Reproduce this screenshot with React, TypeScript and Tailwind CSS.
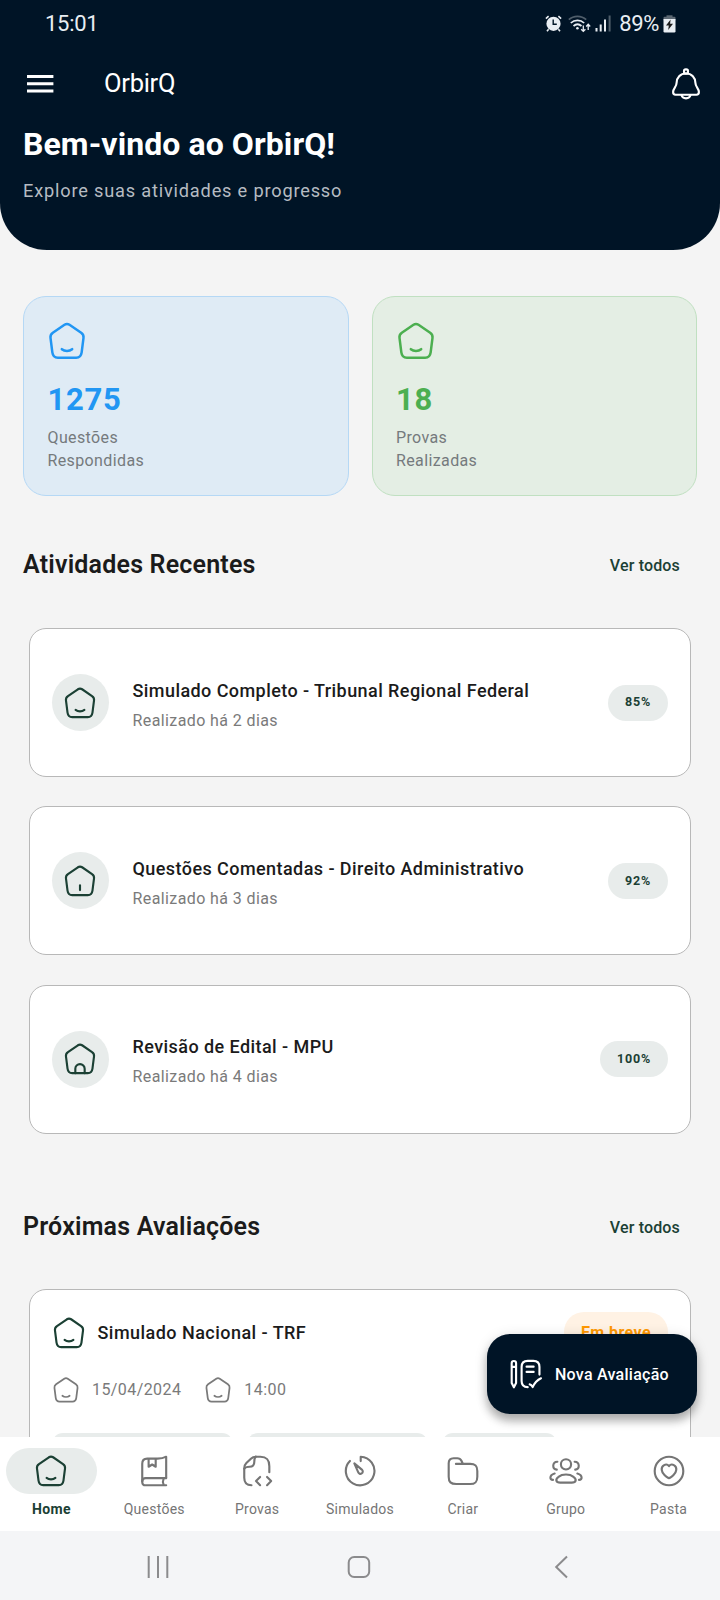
import type { ReactNode } from "react";

type IconProps = { className?: string; children?: ReactNode };

function Icon({ className = "", children }: IconProps) {
  return (
    <svg
      viewBox="0 0 24 24"
      fill="none"
      stroke="currentColor"
      strokeWidth="1.5"
      strokeLinecap="round"
      strokeLinejoin="round"
      className={"shrink-0 " + className}
    >
      {children}
    </svg>
  );
}

const HOUSE =
  "M10.5 2.3C11.4 1.7 12.6 1.7 13.5 2.3L20.5 7.1C21.6 7.9 22.1 8.8 21.9 10.1L20.8 18.8C20.5 21.1 19.6 22 17.5 22H6.5C4.4 22 3.5 21.1 3.2 18.8L2.1 10.1C1.9 8.8 2.4 7.9 3.5 7.1Z";

function House({ className, variant = "smile" }: { className?: string; variant?: "smile" | "line" | "door" }) {
  return (
    <Icon className={className}>
      <path d={HOUSE} />
      {variant === "smile" && <path d="M8.9 16.9C10.6 18.3 13.4 18.3 15.1 16.9" />}
      {variant === "line" && <path d="M12 15.1V18.4" />}
      {variant === "door" && <path d="M8.7 22V18.9A3.3 3.3 0 0 1 15.3 18.9V22" />}
    </Icon>
  );
}

function StatusBar() {
  return (
    <div className="flex h-[47px] items-center justify-between pr-[44px] pl-[45px] text-[22px] leading-none text-[#e9eef3]">
      <span className="tracking-[-0.3px]">15:01</span>
      <div className="flex items-center">
        <svg viewBox="0 0 17 17" className="h-[17px] w-[17px]">
          <circle cx="8.5" cy="8.8" r="7.1" fill="#e9eef3" />
          <path d="M0.9 3.6L3.6 1.1M16.1 3.6L13.4 1.1M3.6 14.2L2 16.2M13.4 14.2L15 16.2" stroke="#e9eef3" strokeWidth="1.6" />
          <path d="M8.2 4.6V9.2H11.8" fill="none" stroke="#001426" strokeWidth="1.4" />
        </svg>
        <svg viewBox="0 0 23 18" className="ml-[6px] h-[18px] w-[23px]" fill="none" stroke="#e9eef3" strokeWidth="1.7">
          <path d="M0.8 4.6C5.6 0.2 13.4 0.2 18.2 4.6" stroke="#4f5e6b" />
          <path d="M2.8 8C6.6 4.4 12.4 4.4 16.2 8" />
          <path d="M5.5 11C8 8.8 11 8.8 13.5 11" />
          <circle cx="9.4" cy="13.3" r="1.3" fill="#e9eef3" stroke="none" />
          <path d="M15.3 10.5V16M13.2 14.2L15.3 16.4L17.4 14.2" strokeWidth="1.3" />
          <path d="M20.2 15V9.6M18.2 11.5L20.2 9.3L22.2 11.5" strokeWidth="1.3" />
        </svg>
        <svg viewBox="0 0 16 17" className="ml-[4px] h-[17px] w-[16px]">
          <path d="M1.5 13V16.5M5.7 9.5V16.5M10 4.5V16.5" stroke="#e9eef3" strokeWidth="2" />
          <path d="M14.6 0.5V16.5" stroke="#4f5e6b" strokeWidth="2" />
        </svg>
        <span className="ml-[8px] tracking-[-0.4px]">89%</span>
        <svg viewBox="0 0 13 18" className="ml-[4px] h-[18px] w-[13px]">
          <rect x="3.5" y="0.3" width="6" height="2" fill="#5c6873" />
          <rect x="0.5" y="1.8" width="12" height="4" rx="1" fill="#5c6873" />
          <path d="M0.5 4H12.5V16.3Q12.5 17.5 11.3 17.5H1.7Q0.5 17.5 0.5 16.3Z" fill="#e9eef3" />
          <path d="M7.6 4.5L3 10.5H5.8L5.2 15L10 8.8H7.1Z" fill="#1c1c1c" />
        </svg>
      </div>
    </div>
  );
}

function Header() {
  return (
    <header className="h-[250px] shrink-0 rounded-b-[47px] bg-[#001426] text-white">
      <StatusBar />
      <div className="flex h-[73px] items-center pr-[17px] pl-[27px]">
        <svg viewBox="0 0 27 18" className="h-[18px] w-[27px]">
          <path d="M0 1.5H26.4M0 8.8H26.4M0 16H26.4" stroke="white" strokeWidth="2.9" />
        </svg>
        <span className="ml-[50px] text-[25.5px] leading-none tracking-[-0.27px]">OrbirQ</span>
        <Icon className="ml-auto h-[34px] w-[34px]">
          <rect x="10.6" y="1.7" width="2.8" height="3" rx="1.2" />
          <path d="M12 4.6C7.8 4.6 5.5 7.6 5.4 11C5.3 14.6 2.9 14.8 2.9 17.7C2.9 19 3.6 19.6 4.6 19.6H19.4C20.4 19.6 21.1 19 21.1 17.7C21.1 14.8 18.7 14.6 18.6 11C18.5 7.6 16.2 4.6 12 4.6Z" />
          <path d="M8.8 19.8C9.6 22.9 14.4 22.9 15.2 19.8" />
        </Icon>
      </div>
      <div className="px-[23px] pt-1">
        <h1 className="text-[32px] leading-10 font-bold tracking-[0.08px]">Bem-vindo ao OrbirQ!</h1>
        <p className="mt-[15px] text-[18.2px] leading-6 tracking-[0.81px] text-[#b6bcc2]">
          Explore suas atividades e progresso
        </p>
      </div>
    </header>
  );
}

function StatCard({ box, accent, value, lines }: { box: string; accent: string; value: string; lines: string[] }) {
  return (
    <div className={"h-[199.5px] rounded-[23px] border-[1.5px] px-[23.5px] pt-6 " + box}>
      <House className={"-ml-[0.5px] h-10 w-10 " + accent} />
      <div className={"mt-[19px] text-[31px] leading-10 font-bold tracking-[0.75px] " + accent}>{value}</div>
      <div className="mt-[6px] text-[16px] leading-[23px] tracking-[0.38px] text-[#757a7d]">
        {lines.map((l) => (
          <div key={l}>{l}</div>
        ))}
      </div>
    </div>
  );
}

function SectionHead({ title, className }: { title: string; className: string }) {
  return (
    <div className={"flex h-[50px] items-center justify-between pr-[17px] " + className}>
      <h2 className="text-[25px] leading-8 font-semibold tracking-[0.19px] text-[#1b1b1b]">{title}</h2>
      <span className="pt-[1px] text-[16px] font-medium tracking-[0.16px] text-[#1b4034]">Ver todos</span>
    </div>
  );
}

const activities: { title: string; when: string; score: string; variant: "smile" | "line" | "door" }[] = [
  { title: "Simulado Completo - Tribunal Regional Federal", when: "Realizado há 2 dias", score: "85%", variant: "smile" },
  { title: "Questões Comentadas - Direito Administrativo", when: "Realizado há 3 dias", score: "92%", variant: "line" },
  { title: "Revisão de Edital - MPU", when: "Realizado há 4 dias", score: "100%", variant: "door" },
];

function ActivityList() {
  return (
    <div className="mx-[6px] mt-[38px] flex flex-col gap-[29.4px]">
      {activities.map((a) => (
        <div
          key={a.title}
          className="flex h-[149px] items-center rounded-[17px] border-[1.5px] border-[#b8b8b8] bg-white px-[22px]"
        >
          <div className="flex h-[57px] w-[57px] shrink-0 items-center justify-center rounded-full bg-[#e8eceb] pr-px text-[#1b4034]">
            <House className="h-[34px] w-[34px]" variant={a.variant} />
          </div>
          <div className="ml-[23.5px] flex-1 pt-[5px] whitespace-nowrap">
            <div className="text-[18px] leading-[30px] font-medium tracking-[0.43px] text-[#1b1b1b]">{a.title}</div>
            <div className="text-[16px] leading-[29px] tracking-[0.4px] text-[#7a7a7a]">{a.when}</div>
          </div>
          <div className="flex h-9 items-center rounded-full bg-[#e8eceb] px-[17px] text-[12.5px] font-bold tracking-[0.83px] text-[#1b4034]">
            {a.score}
          </div>
        </div>
      ))}
    </div>
  );
}

function ExamCard() {
  return (
    <div className="mx-[6px] mt-[37px] h-[230px] rounded-[17px] border-[1.5px] border-[#b8b8b8] bg-white px-[22px] pt-[22px]">
      <div className="flex h-[41px] items-center">
        <House className="h-[34px] w-[34px] text-[#1b4034]" />
        <span className="ml-[11.5px] pb-px text-[18px] font-medium tracking-[0.46px] text-[#1b1b1b]">Simulado Nacional - TRF</span>
        <span className="ml-auto flex h-[41px] items-center rounded-[20px] bg-[#fff2e4] px-[17px] text-[16px] font-bold tracking-[0.42px] text-[#ff9800]">
          Em breve
        </span>
      </div>
      <div className="mt-[22.5px] flex h-7 items-center text-[16px] tracking-[0.42px] text-[#7a7a7a]">
        <House className="h-7 w-7" />
        <span className="ml-3 pt-px">15/04/2024</span>
        <House className="ml-[23px] h-7 w-7" />
        <span className="ml-3 pt-px">14:00</span>
      </div>
      <div className="mt-[29px] flex gap-[14px]">
        <div className="h-9 w-[181px] rounded-[11px] bg-[#e8eceb]" />
        <div className="h-9 w-[181px] rounded-[11px] bg-[#e8eceb]" />
        <div className="h-9 w-[115px] rounded-[11px] bg-[#e8eceb]" />
      </div>
    </div>
  );
}

function NewExamButton() {
  return (
    <button className="absolute right-[23px] bottom-[23px] flex h-20 w-[210.5px] items-center rounded-[23px] bg-[#001426] pl-[22px] text-white shadow-[0_7px_10px_rgba(0,0,0,0.28),0_2px_14px_rgba(0,0,0,0.12)]">
      <Icon className="h-[34px] w-[34px]">
        <path d="M1.9 4.4C1.9 2.3 5 2.3 5 4.4V18.3L3.45 21.4L1.9 18.3ZM1.9 7H5" />
        <path d="M21.5 12.4V7C21.5 4 20.2 2.7 17.2 2.7H13.2C10.2 2.7 8.9 4 8.9 7V17C8.9 20 10.2 21.3 13.2 21.3" />
        <path d="M12.4 6.8H17.4M12.4 10.5H17.4" />
        <path d="M14.6 19.3C15.3 19.4 16.2 20.3 16.7 21.2C18 18.4 20 16.2 22.6 15" />
      </Icon>
      <span className="ml-[12.5px] pt-[2px] text-[16px] font-medium tracking-[0.26px]">Nova Avaliação</span>
    </button>
  );
}

const tabs: { label: string; icon: ReactNode }[] = [
  { label: "Home", icon: <House className="h-[34px] w-[34px]" /> },
  {
    label: "Questões",
    icon: (
      <Icon className="h-[34px] w-[34px]">
        <path d="M20.6 17V1.9C18.6 3 17 3.3 14.5 3.3H7.2C4.9 3.3 3.7 4.5 3.7 6.8V19.4" />
        <path d="M20.6 17H6.1C4.7 17 3.7 18 3.7 19.5C3.7 21 4.7 22.1 6.1 22.1H20.6M18.9 17C18.2 18.5 18.2 20.5 18.9 22" />
        <path d="M8.2 3.5V9L10.7 7.4L13.2 9V3.5" />
      </Icon>
    ),
  },
  {
    label: "Provas",
    icon: (
      <Icon className="h-[34px] w-[34px]">
        <path d="M20.7 12.8V8.6C20.7 3.9 18.9 1.9 14.4 1.9H11.2C9.6 1.9 8.7 2.3 7.7 3.3L4.5 6.4C3.4 7.5 3 8.4 3 10V16.8C3 20.6 4.8 22.1 8.1 22.1" />
        <path d="M11.2 1.9C10.2 2.6 10.1 3.8 10.1 5.4C10.1 8 9.2 9 6.8 9C5 9 3.7 9.2 3 10.4" />
        <path d="M14.2 16.2L11.3 19.1L14.2 22M19.1 16.2L22 19.1L19.1 22" />
      </Icon>
    ),
  },
  {
    label: "Simulados",
    icon: (
      <Icon className="h-[34px] w-[34px]">
        <path d="M12.5 5V1.9A10.1 10.1 0 1 1 4.9 4.9" />
        <path d="M8 6.6L13.3 11C14.3 11.9 14.1 13.2 13.2 13.7C12.2 14.3 11.1 13.9 10.7 12.8Z" />
      </Icon>
    ),
  },
  {
    label: "Criar",
    icon: (
      <Icon className="h-[34px] w-[34px]">
        <path d="M7 7H17C20.8 7 22.1 8.4 22.1 12V16C22.1 19.8 20.8 21.2 17 21.2H7.2C3.4 21.2 1.9 19.8 1.9 16V6.6C1.9 4 3 3 5.4 3H8C9.6 3 10.3 3.6 10.9 4.8L12 7" />
      </Icon>
    ),
  },
  {
    label: "Grupo",
    icon: (
      <Icon className="h-[34px] w-[34px]">
        <circle cx="12" cy="7.3" r="3.6" />
        <path d="M8 20.2C4.7 20.2 4.3 17.8 6.7 16.1C8.1 15 10 14.5 12 14.5C14 14.5 15.9 15 17.3 16.1C19.7 17.8 19.3 20.2 16 20.2Z" />
        <path d="M5.9 5.5C4.2 5.4 3 6.7 3 8.3C3 9.7 4 10.9 5.5 11M18.1 5.5C19.8 5.4 21 6.7 21 8.3C21 9.7 20 10.9 18.5 11" />
        <path d="M4 13.8C2.4 14.3 1 15.5 1 16.7C1 17.7 1.9 18.2 2.8 18.3M20 13.8C21.6 14.3 23 15.5 23 16.7C23 17.7 22.1 18.2 21.2 18.3" />
      </Icon>
    ),
  },
  {
    label: "Pasta",
    icon: (
      <Icon className="h-[34px] w-[34px]">
        <circle cx="12" cy="12" r="10.1" />
        <path d="M8.3 8C9.9 7 11.3 7.6 12 8.5C12.7 7.6 14.1 7 15.7 8C18 9.5 17.4 12.7 15.2 14.8C13.9 16.1 12.9 17 12 17C11.1 17 10.1 16.1 8.8 14.8C6.6 12.7 6 9.5 8.3 8Z" />
      </Icon>
    ),
  },
];

function BottomNav() {
  return (
    <nav className="grid h-[94px] shrink-0 grid-cols-7 bg-white pt-[11px]">
      {tabs.map((t, i) => (
        <div key={t.label} className={"flex flex-col items-center " + (i === 0 ? "text-[#1b4034]" : "text-[#757575]")}>
          <div className={"flex h-[46px] w-[91.5px] items-center justify-center rounded-full " + (i === 0 ? "bg-[#e8eceb]" : "")}>
            {t.icon}
          </div>
          <span className={"mt-[4.5px] text-[14px] leading-5 " + (i === 0 ? "font-bold tracking-[0.35px]" : "tracking-[0.25px]")}>
            {t.label}
          </span>
        </div>
      ))}
    </nav>
  );
}

function SystemNav() {
  return (
    <div className="flex h-[69px] shrink-0 items-center pt-[2px] text-[#8b8b8d]">
      <svg viewBox="0 0 22 24" className="ml-[147px] h-6 w-[22px]" stroke="currentColor" strokeWidth="2">
        <path d="M1.7 1V23M11 1V23M20.3 1V23" />
      </svg>
      <svg viewBox="0 0 24 24" className="ml-[178px] h-6 w-6" fill="none" stroke="currentColor" strokeWidth="2">
        <rect x="1.7" y="2" width="20.5" height="20" rx="5.5" />
      </svg>
      <svg viewBox="0 0 14 24" className="ml-[183px] h-6 w-[14px]" fill="none" stroke="currentColor" strokeWidth="2">
        <path d="M13 1.5L2.2 12L13 22.5" />
      </svg>
    </div>
  );
}

export default function App() {
  return (
    <div className="flex h-[1600px] w-[720px] flex-col overflow-hidden bg-[#f4f5f7] font-['Roboto',sans-serif]">
      <div className="relative flex h-[1437px] shrink-0 flex-col overflow-hidden bg-[#f4f4f4]">
        <Header />
        <main className="px-[23px] pt-[46px]">
          <div className="grid grid-cols-2 gap-[23px]">
            <StatCard box="border-[#b5d8f5] bg-[#dfebf5]" accent="text-[#2196f3]" value="1275" lines={["Questões", "Respondidas"]} />
            <StatCard box="border-[#c0e0c1] bg-[#e4eee4]" accent="text-[#4caf50]" value="18" lines={["Provas", "Realizadas"]} />
          </div>
          <section className="mt-[44.5px]">
            <SectionHead title="Atividades Recentes" className="" />
            <ActivityList />
          </section>
          <section className="mt-[68.5px]">
            <SectionHead title="Próximas Avaliações" className="" />
            <ExamCard />
          </section>
        </main>
        <NewExamButton />
      </div>
      <BottomNav />
      <SystemNav />
    </div>
  );
}
